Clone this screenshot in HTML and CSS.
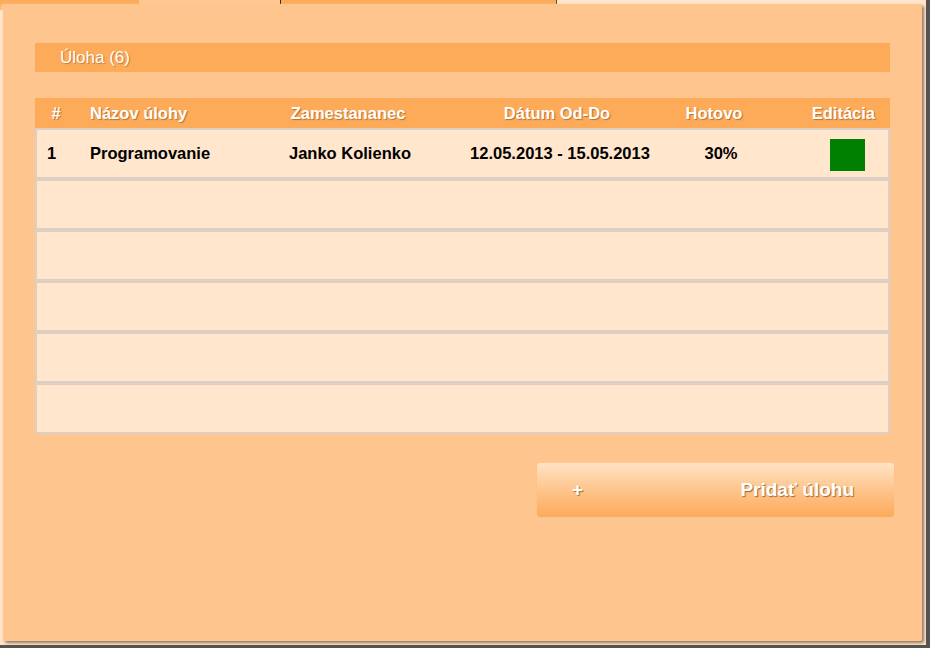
FILE: index.html
```html
<!DOCTYPE html>
<html lang="sk">
<head>
<meta charset="utf-8">
<title>Úlohy</title>
<link rel="stylesheet" href="styles.css">
</head>
<body>
<div class="frame">
  <div class="tabs">
    <div class="tab tab-a"></div>
    <div class="tab tab-b"></div>
    <div class="tab tab-c"></div>
    <div class="tab tab-d"></div>
  </div>
  <div class="window">
    <div class="titlebar">Úloha (6)</div>
    <div class="table">
      <div class="thead">
        <div class="th th-num">#</div>
        <div class="th th-name">Názov úlohy</div>
        <div class="th th-c">Zamestananec</div>
        <div class="th th-c">Dátum Od-Do</div>
        <div class="th th-c">Hotovo</div>
        <div class="th th-edit">Editácia</div>
      </div>
      <div class="row">
        <div class="td td-num">1</div>
        <div class="td td-name">Programovanie</div>
        <div class="td td-c">Janko Kolienko</div>
        <div class="td td-c">12.05.2013 - 15.05.2013</div>
        <div class="td td-c">30%</div>
        <div class="td td-edit"><span class="edit-box"></span></div>
      </div>
      <div class="row"></div>
      <div class="row"></div>
      <div class="row"></div>
      <div class="row"></div>
      <div class="row"></div>
    </div>
    <div class="actions">
      <button class="add-btn" type="button"><span class="plus">+</span><span>Pridať úlohu</span></button>
    </div>
  </div>
</div>
</body>
</html>
```
FILE: styles.css
```css
html, body {
  margin: 0;
  padding: 0;
}
body {
  width: 930px;
  height: 648px;
  overflow: hidden;
  background: #fee3c6;
  font-family: "Liberation Sans", Arial, sans-serif;
}
.frame {
  box-sizing: border-box;
  width: 930px;
  height: 648px;
  border-right: 4px solid #58534e;
  border-bottom: 3px solid #58534e;
  background: #fee4c9;
}
.tabs {
  display: flex;
  height: 10px;
}
.tab { height: 10px; }
.tab-a { width: 139px; background: #fdab5a; }
.tab-b { width: 141px; background: #fec690; }
.tab-c { width: 138px; background: #fdab5a; border-left: 1px solid #3d2a18; box-sizing: border-box; }
.tab-d { width: 138px; background: #fdab5a; border-right: 1px solid #5a4a3a; }
.window {
  position: relative;
  margin: -6px 0 0 3px;
  width: 919px;
  height: 637px;
  box-sizing: border-box;
  padding: 39px 32px 0 32px;
  background: #fec68e;
  border-radius: 2px;
  box-shadow: 2px 2px 3px rgba(60, 40, 20, 0.55), -2px 0 2px rgba(255, 230, 200, 0.6);
}
.titlebar {
  height: 29px;
  background: #fdab59;
  color: #fff;
  font-size: 17px;
  line-height: 30px;
  padding-left: 25px;
  text-shadow: 1px 1px 1px rgba(120, 70, 20, 0.45);
}
.table {
  margin-top: 26px;
}
.thead {
  display: grid;
  grid-template-columns: 42px 173px 196px 222px 92px 1fr;
  height: 30px;
  align-items: center;
  background: #fdab59;
  color: #fff;
  font-weight: bold;
  font-size: 16.5px;
  text-shadow: 1px 1px 1px rgba(110, 60, 10, 0.5);
}
.th-num { text-align: center; }
.th-name { padding-left: 13px; }
.th-c { text-align: center; }
.th-edit { text-align: right; padding-right: 15px; }
.row {
  display: grid;
  grid-template-columns: 38px 175px 200px 220px 102px 1fr;
  align-items: center;
  height: 51px;
  box-sizing: border-box;
  border: 2px solid #ddcfc2;
  background: #ffe6cc;
  color: #000;
  font-weight: bold;
  font-size: 16.5px;
}
.td-num { padding-left: 10px; }
.td-name { padding-left: 15px; }
.td-c { text-align: center; }
.td-edit {
  display: flex;
  justify-content: flex-end;
  padding-right: 23px;
  padding-top: 3px;
}
.edit-box {
  display: block;
  width: 35px;
  height: 32px;
  background: #008000;
}
.actions {
  display: flex;
  justify-content: flex-end;
  margin-top: 29px;
  margin-right: -4px;
}
.add-btn {
  display: flex;
  justify-content: space-between;
  align-items: center;
  width: 357px;
  height: 53px;
  padding: 0 40px 0 35px;
  border: none;
  border-radius: 3px;
  background: linear-gradient(to bottom, #ffe3c6 0%, #fec892 45%, #fdab5a 100%);
  box-shadow: 0 1px 1px rgba(200, 120, 40, 0.3);
  color: #fff;
  font-family: "Liberation Sans", Arial, sans-serif;
  font-weight: bold;
  font-size: 19px;
  text-shadow: 1px 1px 1px rgba(90, 50, 10, 0.6);
  cursor: pointer;
}
.plus { font-size: 19px; }
```
